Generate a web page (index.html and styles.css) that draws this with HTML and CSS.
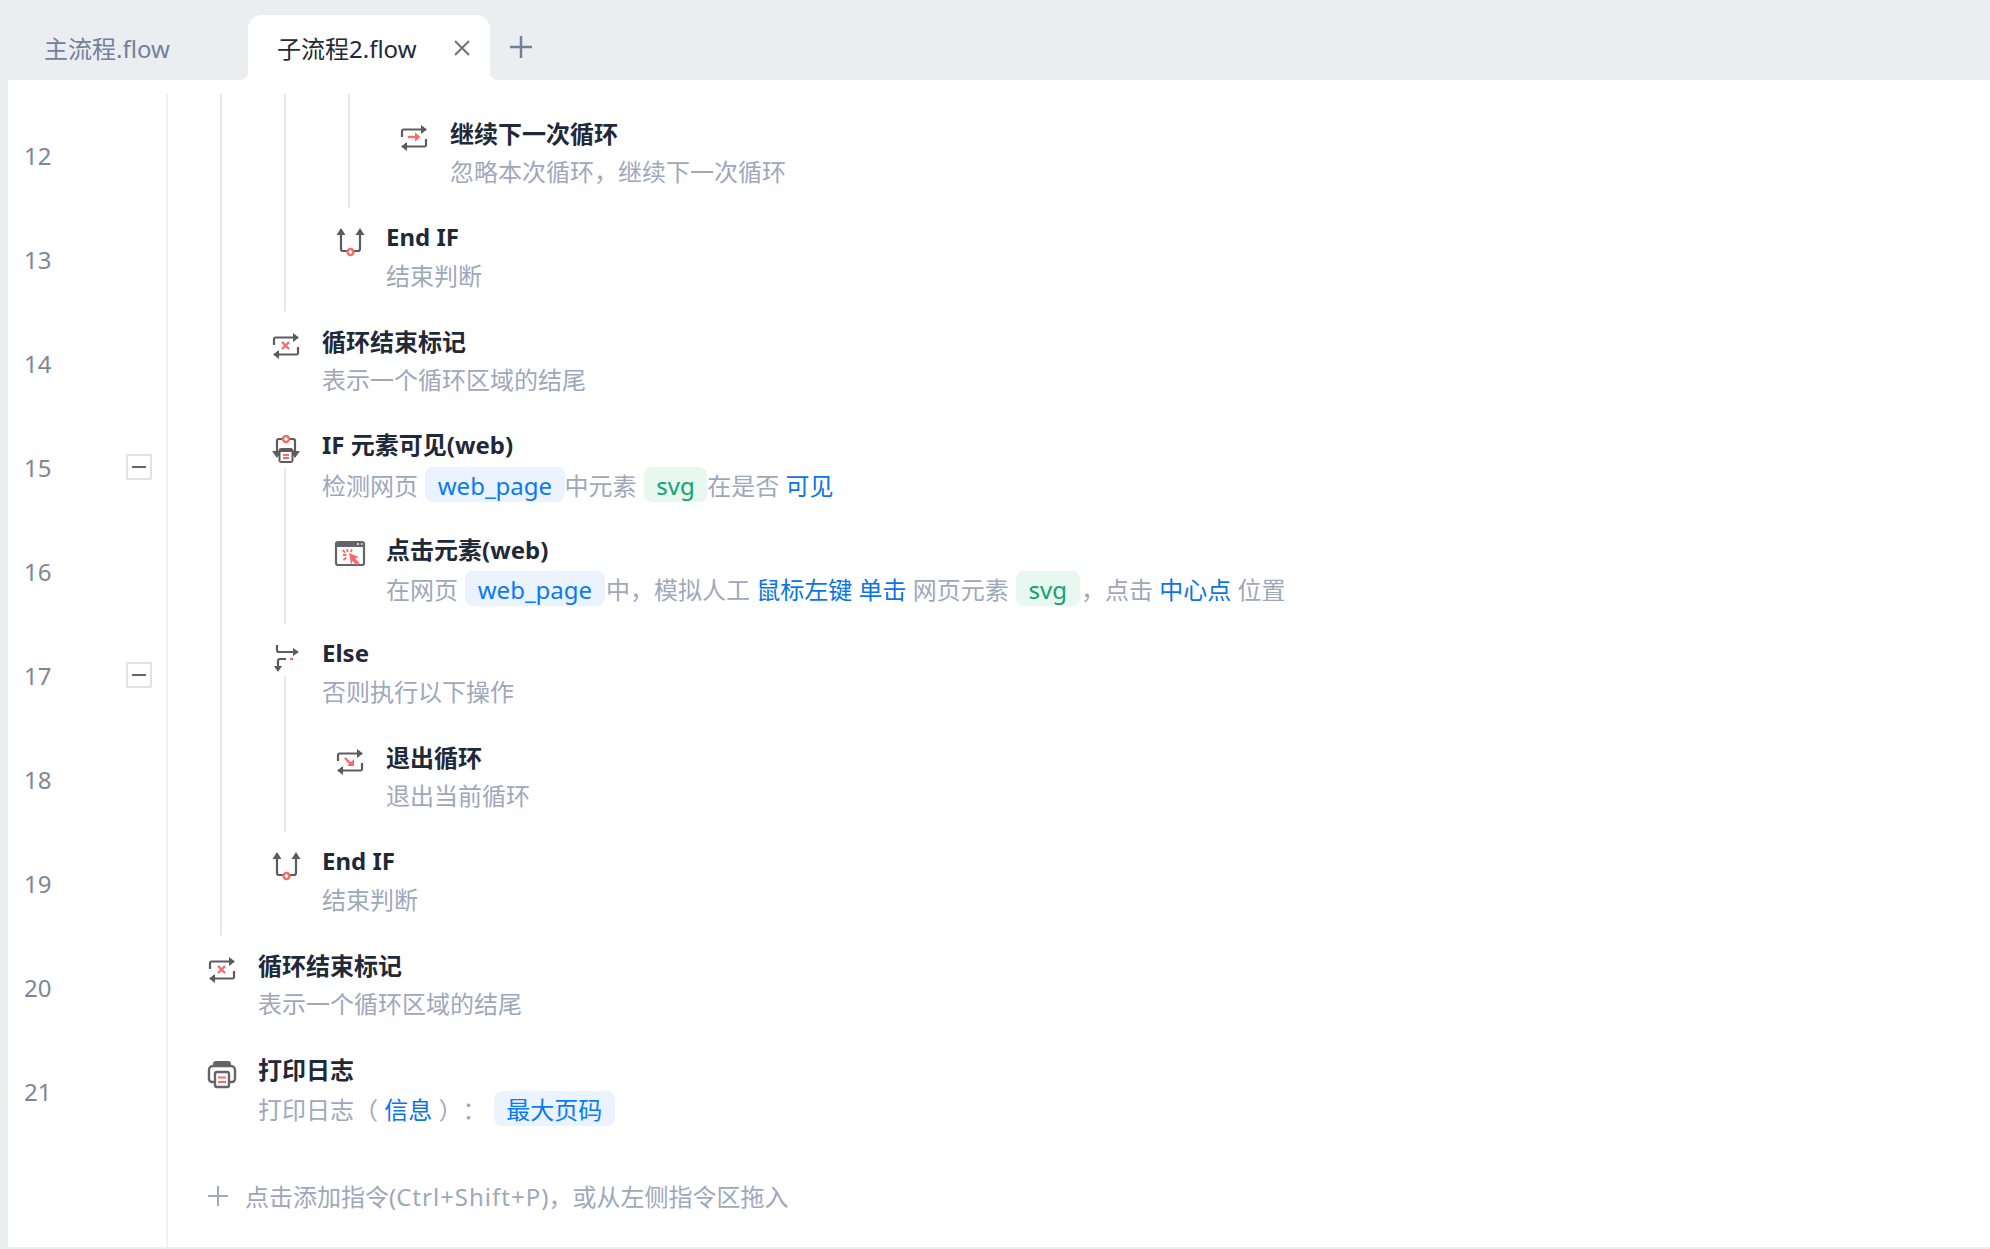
FILE: index.html
```html
<!DOCTYPE html>
<html lang="zh-CN">
<head>
    <meta charset="UTF-8">
    <title>子流程2.flow</title>
    <link rel="stylesheet" href="styles.css">
</head>
<body>
    <!-- icon sprites -->
    <svg class="sprites" width="0" height="0">
        <symbol id="i-loop" viewBox="0 0 32 32">
            <path d="M4 16V10a1.500 1.500 0 0 1 1.500-1.500H25M28 18v6a1.500 1.500 0 0 1-1.500 1.500H7" fill="none" stroke="#5c5c5c" stroke-width="2.200"/>
            <path d="M23 4l6 4.500-6 4.500zM9 21l-6 4.500 6 4.500z" fill="#5c5c5c"/>
        </symbol>
        <symbol id="i-endif" viewBox="0 0 32 32">
            <path d="M7 8v16a2 2 0 0 0 2 2h4M26 8v16a2 2 0 0 1-2 2h-4" fill="none" stroke="#5c5c5c" stroke-width="2.200"/>
            <path d="M7 3l4.500 7h-9zM26 3l4.500 7h-9z" fill="#5c5c5c"/>
            <circle cx="16.500" cy="27" r="3" fill="#fff" stroke="#f76b6b" stroke-width="2.400"/>
        </symbol>
        <symbol id="i-if" viewBox="0 0 32 32">
            <path d="M13 6H9a2 2 0 0 0-2 2v11M19 6h4a2 2 0 0 1 2 2v11" fill="none" stroke="#5c5c5c" stroke-width="2.200"/>
            <path d="M2 18h10l-5 7zM20 18h10l-5 7z" fill="#5c5c5c"/>
            <circle cx="16" cy="6" r="3" fill="#fff" stroke="#f76b6b" stroke-width="2.400"/>
            <rect x="8.500" y="15" width="15" height="15" rx="3" fill="#5c5c5c"/>
            <rect x="10.500" y="19" width="11" height="9" fill="#fff"/>
            <path d="M13 22h6M13 25h6" stroke="#f76b6b" stroke-width="2"/>
        </symbol>
        <symbol id="i-else" viewBox="0 0 32 32">
            <path d="M7 4v5a2 2 0 0 0 2 2h16M16 18h-6a2 2 0 0 0-2 2v6" fill="none" stroke="#5c5c5c" stroke-width="2.200"/>
            <path d="M23 7l6 4-6 4zM4 25h8l-4 6z" fill="#5c5c5c"/>
            <path d="M20 18h3" stroke="#f76b6b" stroke-width="2.200"/>
        </symbol>
    </svg>

    <div class="tabbar">
        <div class="tab">主流程.flow</div>
        <div class="tab tab-active">
            <span class="tab-name">子流程2.flow</span>
            <svg class="tab-close" viewBox="0 0 16 16"><path d="M1 1l14 14M15 1L1 15"/></svg>
        </div>
        <svg class="tab-add" viewBox="0 0 24 24"><path d="M12 1v22M1 12h22"/></svg>
    </div>

    <div class="panel">
        <div class="row row-top">
            <div class="gutter"></div>
            <div class="cell"><i class="stem"></i></div>
            <div class="cell"><i class="stem"></i></div>
            <div class="cell"><i class="stem"></i></div>
        </div>

        <div class="row">
            <div class="gutter"><span class="num">12</span></div>
            <div class="cell"><i class="stem"></i></div>
            <div class="cell"><i class="stem"></i></div>
            <div class="cell"><i class="stem"></i></div>
            <div class="cell">
                <svg class="icon" viewBox="0 0 32 32"><use href="#i-loop"/><path d="M10 16h8" stroke="#f76b6b" stroke-width="2.400"/><path d="M17 11.500l5.500 4.500-5.500 4.500z" fill="#f76b6b"/></svg>
            </div>
            <div class="body">
                <div class="title">继续下一次循环</div>
                <div class="desc">忽略本次循环，继续下一次循环</div>
            </div>
        </div>

        <div class="row">
            <div class="gutter"><span class="num">13</span></div>
            <div class="cell"><i class="stem"></i></div>
            <div class="cell"><i class="stem"></i></div>
            <div class="cell"><svg class="icon"><use href="#i-endif"/></svg></div>
            <div class="body">
                <div class="title title-en">End IF</div>
                <div class="desc">结束判断</div>
            </div>
        </div>

        <div class="row">
            <div class="gutter"><span class="num">14</span></div>
            <div class="cell"><i class="stem"></i></div>
            <div class="cell">
                <svg class="icon" viewBox="0 0 32 32"><use href="#i-loop"/><path d="M12 13l7 7M19 13l-7 7" stroke="#f76b6b" stroke-width="2.400"/></svg>
            </div>
            <div class="body">
                <div class="title">循环结束标记</div>
                <div class="desc">表示一个循环区域的结尾</div>
            </div>
        </div>

        <div class="row">
            <div class="gutter">
                <span class="num">15</span>
                <span class="fold"></span>
            </div>
            <div class="cell"><i class="stem"></i></div>
            <div class="cell">
                <svg class="icon"><use href="#i-if"/></svg>
                <i class="stem stem-below"></i>
            </div>
            <div class="body">
                <div class="title title-en">IF 元素可见(web)</div>
                <div class="desc desc-tags">检测网页 <span class="chip">web_page</span>中元素 <span class="chip chip-green">svg</span>在是否 <span class="val">可见</span></div>
            </div>
        </div>

        <div class="row">
            <div class="gutter"><span class="num">16</span></div>
            <div class="cell"><i class="stem"></i></div>
            <div class="cell"><i class="stem"></i></div>
            <div class="cell">
                <svg class="icon" viewBox="0 0 32 32">
                    <rect x="2" y="5" width="28" height="23" rx="2" fill="#fff" stroke="#66636b" stroke-width="2.200"/>
                    <path d="M2 5h28v5H2z" fill="#66636b"/>
                    <path d="M23 7h2M27 7h1.500" stroke="#fff" stroke-width="1.600"/>
                    <path d="M15 16l10 4-4 1.500 4.500 4.500-2.500 2.500-4.500-4.500-1.500 4z" fill="#f76b6b"/>
                    <path d="M9 18h3.500M13 12l.8 3M8.500 13l2.800 2.500M9.500 23l2.800-2.500M18 12.500l-1.500 2.500" stroke="#f76b6b" stroke-width="1.800"/>
                </svg>
            </div>
            <div class="body">
                <div class="title">点击元素(web)</div>
                <div class="desc desc-tags desc-wide">在网页 <span class="chip">web_page</span>中，模拟人工 <span class="val">鼠标左键</span> <span class="val">单击</span> 网页元素 <span class="chip chip-green">svg</span>，点击 <span class="val">中心点</span> 位置</div>
            </div>
        </div>

        <div class="row">
            <div class="gutter">
                <span class="num">17</span>
                <span class="fold"></span>
            </div>
            <div class="cell"><i class="stem"></i></div>
            <div class="cell">
                <svg class="icon"><use href="#i-else"/></svg>
                <i class="stem stem-below"></i>
            </div>
            <div class="body">
                <div class="title title-en">Else</div>
                <div class="desc">否则执行以下操作</div>
            </div>
        </div>

        <div class="row">
            <div class="gutter"><span class="num">18</span></div>
            <div class="cell"><i class="stem"></i></div>
            <div class="cell"><i class="stem"></i></div>
            <div class="cell">
                <svg class="icon" viewBox="0 0 32 32"><use href="#i-loop"/><path d="M11 13l6 6" stroke="#f76b6b" stroke-width="2.400"/><path d="M20 14v7h-7z" fill="#f76b6b"/></svg>
            </div>
            <div class="body">
                <div class="title">退出循环</div>
                <div class="desc">退出当前循环</div>
            </div>
        </div>

        <div class="row">
            <div class="gutter"><span class="num">19</span></div>
            <div class="cell"><i class="stem"></i></div>
            <div class="cell"><svg class="icon"><use href="#i-endif"/></svg></div>
            <div class="body">
                <div class="title title-en">End IF</div>
                <div class="desc">结束判断</div>
            </div>
        </div>

        <div class="row">
            <div class="gutter"><span class="num">20</span></div>
            <div class="cell">
                <svg class="icon" viewBox="0 0 32 32"><use href="#i-loop"/><path d="M12 13l7 7M19 13l-7 7" stroke="#f76b6b" stroke-width="2.400"/></svg>
            </div>
            <div class="body">
                <div class="title">循环结束标记</div>
                <div class="desc">表示一个循环区域的结尾</div>
            </div>
        </div>

        <div class="row">
            <div class="gutter"><span class="num">21</span></div>
            <div class="cell">
                <svg class="icon" viewBox="0 0 32 32">
                    <path d="M7 9V7a3 3 0 0 1 3-3h12a3 3 0 0 1 3 3v2z" fill="#66636b"/>
                    <path d="M9 25H6a3 3 0 0 1-3-3v-9a4 4 0 0 1 4-4h18a4 4 0 0 1 4 4v9a3 3 0 0 1-3 3h-3" fill="none" stroke="#66636b" stroke-width="2.400"/>
                    <rect x="9" y="15" width="14" height="15" rx="2" fill="#fff" stroke="#66636b" stroke-width="2.400"/>
                    <path d="M12 20.500h8M12 25h8" stroke="#f76b6b" stroke-width="2"/>
                </svg>
            </div>
            <div class="body">
                <div class="title">打印日志</div>
                <div class="desc desc-tags">打印日志（ <span class="val">信息</span> ）： <span class="chip">最大页码</span></div>
            </div>
        </div>

        <div class="row row-add">
            <div class="gutter"></div>
            <div class="add">
                <svg class="add-icon" viewBox="0 0 20 20"><path d="M10 0v20M0 10h20"/></svg>
                <span>点击添加指令(<span class="add-keys">Ctrl+Shift+P</span>)，或从左侧指令区拖入</span>
            </div>
        </div>
    </div>
</body>
</html>
```

FILE: styles.css
```css
html, body {
    height: 100%;
}
body {
    margin: 0;
    background-color: #ebedf1;
    font-family: "Noto Sans", "Noto Sans CJK SC", sans-serif;
    font-size: 24px;
    overflow: hidden;
    text-spacing-trim: space-all;
}
.sprites {
    display: block;
    height: 0;
}

/* tabs */
.tabbar {
    display: flex;
    align-items: flex-start;
    height: 65px;
    padding-top: 15px;
}
.tab {
    width: 248px;
    box-sizing: border-box;
    height: 65px;
    padding-left: 44px;
    line-height: 67px;
    color: #72809a;
}
.tab-active {
    position: relative;
    width: 242px;
    display: flex;
    align-items: center;
    justify-content: space-between;
    padding: 0 20px 0 29px;
    background-color: #fff;
    border-radius: 14px 14px 0 0;
    color: #1f2937;
}
.tab-active::before,
.tab-active::after {
    content: "";
    position: absolute;
    bottom: 0;
    width: 8px;
    height: 8px;
}
.tab-active::before {
    left: -8px;
    background: radial-gradient(circle at 0 0, #ebedf1 8px, #fff 8.500px);
}
.tab-active::after {
    right: -8px;
    background: radial-gradient(circle at 100% 0, #ebedf1 8px, #fff 8.500px);
}
.tab-name {
    padding-top: 2px;
}
.tab-close {
    width: 16px;
    height: 16px;
    fill: none;
    stroke: #6b7280;
    stroke-width: 2;
}
.tab-add {
    width: 24px;
    height: 24px;
    margin: 20px 0 0 19px;
    fill: none;
    stroke: #72809a;
    stroke-width: 2.500;
}

/* editor */
.panel {
    display: flex;
    flex-direction: column;
    height: 1167px;
    margin-left: 8px;
    padding-top: 14px;
    box-sizing: border-box;
    background-color: #fff;
}
.row {
    display: flex;
    flex: none;
    height: 104px;
}
.row-top {
    height: 10px;
}
.row-add {
    flex: 1;
}
.gutter {
    display: flex;
    align-items: center;
    flex: none;
    box-sizing: border-box;
    width: 160px;
    margin-right: 22px;
    padding: 0 14px 2px 16px;
    border-right: 2px solid #f0f0f5;
}
.num {
    color: #7d8796;
}
.fold {
    position: relative;
    box-sizing: border-box;
    width: 26px;
    height: 26px;
    margin-left: auto;
    border: 2px solid #e2e2e2;
    border-radius: 2px;
}
.fold::after {
    content: "";
    position: absolute;
    left: 4px;
    right: 4px;
    top: 10px;
    height: 2px;
    background-color: #666;
}
.cell {
    display: flex;
    flex-direction: column;
    align-items: center;
    flex: none;
    width: 64px;
}
.stem {
    display: block;
    flex: 1;
    width: 2px;
    margin-right: 2px;
    background-color: #e8e8f0;
}
.stem-below {
    margin-top: 3px;
}
.icon {
    flex: none;
    display: block;
    width: 32px;
    height: 32px;
    margin-top: 17px;
}
.body {
    margin-left: 4px;
    padding-top: 13px;
    white-space: nowrap;
}
.title {
    height: 34px;
    line-height: 34px;
    font-weight: 700;
    color: #1f2937;
}
.title-en {
    line-height: 32px;
}
.desc {
    height: 36px;
    margin-top: 3px;
    line-height: 36px;
    color: #9ea8bc;
}
.desc-tags {
    margin-top: 5px;
}
.chip {
    display: inline-block;
    height: 35px;
    line-height: 37px;
    margin: -1px 0 0 1px;
    padding: 0 12.500px;
    border-radius: 8px;
    background-color: #eaf3ff;
    color: #0a7bf5;
    vertical-align: top;
}
.desc-wide .chip {
    margin-right: 1.500px;
}
.chip-green {
    background-color: #e8f7f0;
    color: #0fa56e;
}
.val {
    color: #0a74ea;
}
.add {
    display: flex;
    align-items: center;
    gap: 17px;
    padding-left: 18px;
    color: #9ea8bc;
}
.add-keys {
    letter-spacing: 1px;
}
.add-icon {
    width: 20px;
    height: 20px;
    fill: none;
    stroke: #9ea8bc;
    stroke-width: 2;
}
```
